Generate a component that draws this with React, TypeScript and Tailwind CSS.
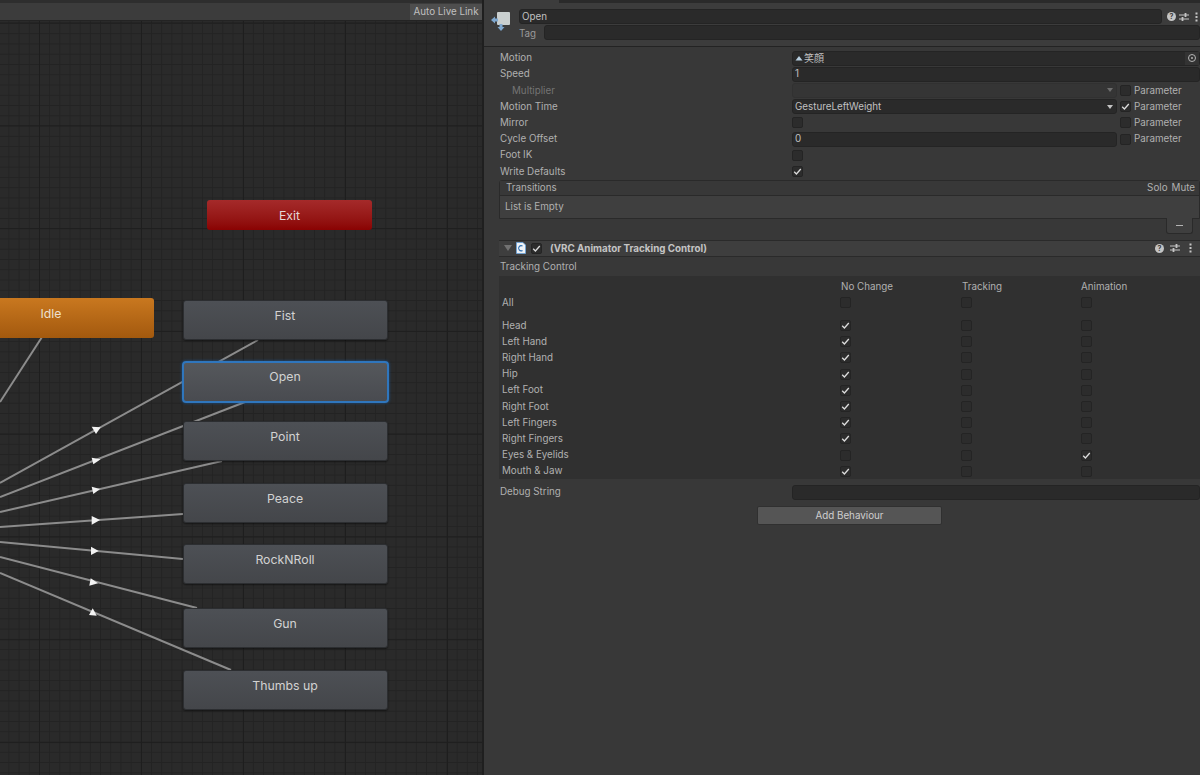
const font = "font-['Inter','Liberation_Sans',sans-serif]";

const links = [
  [42, 337, 0, 402],
  [258, 340, 0, 483],
  [245, 402, 0, 497],
  [222, 461, 0, 512],
  [183, 514, 0, 527],
  [183, 559, 0, 542],
  [197, 608, 0, 557],
  [231, 670, 0, 573],
];

const arrows = [
  "91.7,426.7 100.7,427.3 96,434",
  "91.7,457.7 100.7,459.3 93.3,464.3",
  "91.7,486.7 100,489 93.3,494",
  "91.7,516 100,520 91.7,524.7",
  "91,546.7 98.7,551 91,555",
  "89.3,585.7 90.7,578.3 98,583.3",
  "89,615 92.7,608.3 96.7,615.7",
];

const nodes = [
  { label: "Fist", top: 300 },
  { label: "Point", top: 421 },
  { label: "Peace", top: 483 },
  { label: "RockNRoll", top: 544 },
  { label: "Gun", top: 608 },
  { label: "Thumbs up", top: 670 },
];

const bodyParts = [
  { label: "Head", value: "n" },
  { label: "Left Hand", value: "n" },
  { label: "Right Hand", value: "n" },
  { label: "Hip", value: "n" },
  { label: "Left Foot", value: "n" },
  { label: "Right Foot", value: "n" },
  { label: "Left Fingers", value: "n" },
  { label: "Right Fingers", value: "n" },
  { label: "Eyes & Eyelids", value: "a" },
  { label: "Mouth & Jaw", value: "n" },
];

function Check({ on }: { on?: boolean }) {
  return (
    <span className="flex h-[11px] w-[11px] shrink-0 items-center justify-center rounded-[2px] border border-[#242424] bg-[#2c2c2c]">
      {on && (
        <svg width="9" height="9" viewBox="0 0 9 9">
          <path d="M1.2 4.8 L3.4 7 L7.8 2" fill="none" stroke="#dcdcdc" strokeWidth="1.3" />
        </svg>
      )}
    </span>
  );
}

function Field({ children, className = "" }: { children?: React.ReactNode; className?: string }) {
  return (
    <div className={`flex h-[15px] min-w-0 flex-1 items-center rounded-[3px] border border-[#242424] bg-[#2a2a2a] px-[2px] text-[#c0c0c0] ${className}`}>
      {children}
    </div>
  );
}

function Param({ on }: { on?: boolean }) {
  return (
    <div className="flex w-[83px] shrink-0 items-center gap-[3px] pl-[3px]">
      <Check on={on} />
      <span>Parameter</span>
    </div>
  );
}

function Row({ label, dim, children }: { label: string; dim?: boolean; children: React.ReactNode }) {
  return (
    <div className="flex h-[16.2px] items-center pl-[16px]">
      <span className={dim ? "w-[292px] shrink-0 pl-[12px] text-[#747474]" : "w-[292px] shrink-0"}>{label}</span>
      <div className="flex min-w-0 flex-1 items-center">{children}</div>
    </div>
  );
}

function HelpIcon() {
  return (
    <span className="flex h-[9px] w-[9px] items-center justify-center rounded-full bg-[#c4c4c4] text-[7px] font-bold leading-none text-[#383838]">?</span>
  );
}

function SlidersIcon() {
  return (
    <svg width="10" height="10" viewBox="0 0 10 10" stroke="#c4c4c4" strokeWidth="1.2">
      <path d="M0 3 H10 M0 7 H10" />
      <path d="M6.5 1 V5 M3.5 5 V9" strokeWidth="1.8" />
    </svg>
  );
}

function DotsIcon() {
  return (
    <svg width="3" height="10" viewBox="0 0 3 10" fill="#c4c4c4">
      <rect x="0.5" y="0.5" width="2" height="2" />
      <rect x="0.5" y="4" width="2" height="2" />
      <rect x="0.5" y="7.5" width="2" height="2" />
    </svg>
  );
}

function StateNode({ label, top }: { label: string; top: number }) {
  return (
    <div
      className="absolute left-[183px] flex h-[40px] w-[205px] justify-center rounded-[3px] border border-[#2c2e31] bg-gradient-to-b from-[#4d5055] to-[#44464a] pr-[1px] pt-[5.5px] text-[12.3px] text-[#d2d2d2] shadow-[0_1px_2px_rgba(0,0,0,0.5)]"
      style={{ top }}
    >
      {label}
    </div>
  );
}

function Graph() {
  return (
    <div className="relative w-[484px] shrink-0 overflow-hidden border-r-2 border-[#1f1f1f] bg-[#2a2a2a]">
      <div className="absolute inset-0 bg-[linear-gradient(to_right,#1e1e1e_1px,transparent_1px),linear-gradient(to_bottom,#1e1e1e_1px,transparent_1px),linear-gradient(to_right,#232323_1px,transparent_1px),linear-gradient(to_bottom,#232323_1px,transparent_1px)] bg-[size:102px_102.8px,102px_102.8px,10.2px_10.28px,10.2px_10.28px] bg-[position:39px_22.5px,39px_22.5px,8.4px_2.4px,8.4px_2.4px]" />

      <svg className="absolute inset-0" width="482" height="775">
        {links.map(([x1, y1, x2, y2], i) => (
          <line key={i} x1={x1} y1={y1} x2={x2} y2={y2} stroke="#8c8c8c" strokeWidth="2" />
        ))}
        {arrows.map((points) => (
          <polygon key={points} points={points} fill="#f2f2f2" />
        ))}
      </svg>

      <div className="relative z-10 flex h-[20px] items-center justify-end border-t-[3px] border-[#2e2e2e] bg-[#3c3c3c] shadow-[0_1px_0_#232323]">
        <span className="flex h-[16px] w-[72px] items-center justify-center bg-[#4e4e4e] pt-[1px] text-[9.8px] text-[#c0c0c0]">
          Auto Live Link
        </span>
      </div>

      <div className="absolute left-[207px] top-[200px] flex h-[30px] w-[165px] items-center justify-center rounded-[3px] bg-gradient-to-b from-[#a52a2a] to-[#8a0202] pt-[2px] text-[12.3px] text-[#e4d8d8]">
        Exit
      </div>
      <div className="absolute left-[-52px] top-[298px] flex h-[40px] w-[206px] justify-center rounded-[3px] bg-gradient-to-b from-[#c9781f] to-[#a3590e] pt-[7px] text-[12.3px] text-[#ede0d0]">
        Idle
      </div>

      {nodes.map((n) => (
        <StateNode key={n.label} label={n.label} top={n.top} />
      ))}

      <div className="absolute left-[182px] top-[361px] flex h-[42px] w-[207px] justify-center rounded-[4px] border-[2px] border-[#2f76bd] bg-gradient-to-b from-[#55585c] to-[#494b50] pr-[1px] pt-[5px] text-[12.3px] text-[#d2d2d2] shadow-[0_0_3px_#1d5a96]">
        Open
      </div>
    </div>
  );
}

function Inspector() {
  return (
    <div className="min-w-0 flex-1 bg-[#383838] text-[9.8px] leading-none text-[#b0b0b0]">
      {/* state header */}
      <div className="flex h-[47px] border-b border-[#232323] bg-[#3c3c3c]">
        <div className="flex w-[34px] shrink-0 items-start justify-center pt-[11px]">
          <svg width="20" height="21" viewBox="0 0 20 21">
            <rect x="6" y="1" width="13" height="13" rx="1" fill="#c9cfcf" />
            <path d="M0 9 L4 5.5 V7.5 H7 V10.5 H4 V12.5 Z" fill="#7fa8cf" />
            <path d="M10 20 L6.5 16 H8.5 V13 H11.5 V16 H13.5 Z" fill="#7fa8cf" />
          </svg>
        </div>
        <div className="flex min-w-0 flex-1 flex-col">
          <div className="flex h-[3px]">
            <div className="w-[41px]" />
            <div className="flex-1 bg-[#2a2a2a]" />
          </div>
          <div className="mt-[6px] flex items-center">
            <Field className="ml-[1px]">Open</Field>
            <div className="flex w-[38px] shrink-0 items-center pl-[5px]">
              <HelpIcon />
              <span className="ml-[3px]"><SlidersIcon /></span>
              <span className="ml-[6px]"><DotsIcon /></span>
            </div>
          </div>
          <div className="mt-[1px] flex h-[15px] items-center">
            <span className="w-[26px] shrink-0 pl-[1px] pt-[2px] text-[#9a9a9a]">Tag</span>
            <Field />
          </div>
        </div>
      </div>

      {/* motion settings */}
      <div className="pt-[3px]">
        <Row label="Motion">
          <Field className="pr-0">
            <svg width="8" height="8" viewBox="0 0 8 8" className="mr-[1px]">
              <path d="M0.5 6.5 L4 2 L7.5 6.5 Z" fill="#b8cfe0" />
            </svg>
            <span className="flex-1 font-['Noto_Sans_CJK_JP',sans-serif] text-[10px]">笑顔</span>
            <span className="flex h-full w-[14px] items-center justify-center bg-[#333]">
              <span className="flex h-[8px] w-[8px] items-center justify-center rounded-full border border-[#b4b4b4]">
                <span className="h-[2px] w-[2px] rounded-full bg-[#b4b4b4]" />
              </span>
            </span>
          </Field>
        </Row>
        <Row label="Speed">
          <Field>1</Field>
        </Row>
        <Row label="Multiplier" dim>
          <div className="flex h-[15px] min-w-0 flex-1 items-center justify-end rounded-[3px] border border-[#313131] bg-[#353535] pr-[3px]">
            <span className="h-0 w-0 border-x-[3.5px] border-t-[4px] border-x-transparent border-t-[#6e6e6e]" />
          </div>
          <Param />
        </Row>
        <Row label="Motion Time">
          <Field className="justify-between pr-[3px]">
            GestureLeftWeight
            <span className="h-0 w-0 border-x-[3.5px] border-t-[4px] border-x-transparent border-t-[#c4c4c4]" />
          </Field>
          <Param on />
        </Row>
        <Row label="Mirror">
          <div className="flex-1">
            <Check />
          </div>
          <Param />
        </Row>
        <Row label="Cycle Offset">
          <Field>0</Field>
          <Param />
        </Row>
        <Row label="Foot IK">
          <Check />
        </Row>
        <Row label="Write Defaults">
          <Check on />
        </Row>
      </div>

      {/* transitions list */}
      <div className="ml-[15px] flex h-[39px] flex-col rounded-t-[3px] border border-[#2a2a2a] bg-[#3f3f3f]">
        <div className="flex h-[15px] shrink-0 items-center justify-between border-b border-[#2a2a2a] bg-[#383838] pl-[6px] pr-[4px]">
          <span>Transitions</span>
          <span className="flex gap-[4px]">
            <span>Solo</span>
            <span>Mute</span>
          </span>
        </div>
        <div className="flex flex-1 items-center pl-[5px] pt-[1px]">List is Empty</div>
      </div>
      <div className="flex h-[15px] justify-end pr-[7px]">
        <div className="mt-[-1px] flex h-[16px] w-[27px] items-center justify-center rounded-b-[3px] border border-t-0 border-[#2a2a2a] bg-[#3f3f3f]">
          <span className="h-[1px] w-[7px] bg-[#b4b4b4]" />
        </div>
      </div>

      {/* tracking control */}
      <div className="ml-[15px] mt-[6px] flex h-[17px] items-center border-y border-[#2a2a2a] bg-[#3e3e3e]">
        <span className="ml-[5px] h-0 w-0 border-x-[4px] border-t-[6px] border-x-transparent border-t-[#727272]" />
        <svg width="10" height="12" viewBox="0 0 10 12" className="ml-[4px]">
          <path d="M0.5 0.5 H7 L9.5 3 V11.5 H0.5 Z" fill="#eef2f6" stroke="#6aa5de" strokeWidth="0.8" />
          <path d="M6.5 4 A2.6 2.6 0 1 0 6.5 8.5" fill="none" stroke="#2a6cb0" strokeWidth="1.1" />
        </svg>
        <span className="ml-[5px]">
          <Check on />
        </span>
        <span className="ml-[8px] flex-1 pt-[1px] font-bold text-[#c4c4c4]">(VRC Animator Tracking Control)</span>
        <HelpIcon />
        <span className="ml-[6px]"><SlidersIcon /></span>
        <span className="ml-[9px] mr-[8px]"><DotsIcon /></span>
      </div>
      <div className="flex h-[19px] items-center pl-[16px] pt-[1px]">Tracking Control</div>

      <div className="ml-[15px] bg-[#303030] pl-[3px]">
        <div className="flex h-[18px] items-center pt-[4px]">
          <span className="ml-[339px] w-[121px]">No Change</span>
          <span className="w-[119px]">Tracking</span>
          <span>Animation</span>
        </div>
        <div className="flex h-[18px] items-center">
          <span className="w-[338px]">All</span>
          <span className="w-[121px]"><Check /></span>
          <span className="w-[120px]"><Check /></span>
          <Check />
        </div>
        <div className="h-[6px]" />
        {bodyParts.map((p) => (
          <div key={p.label} className="flex h-[16.2px] items-center">
            <span className="w-[338px]">{p.label}</span>
            <span className="w-[121px]"><Check on={p.value === "n"} /></span>
            <span className="w-[120px]"><Check /></span>
            <Check on={p.value === "a"} />
          </div>
        ))}
      </div>

      <div className="mt-[5px] flex h-[16px] items-center pl-[16px]">
        <span className="w-[292px] shrink-0">Debug String</span>
        <Field />
      </div>
      <div className="mt-[6px] flex justify-start pl-[273px]">
        <div className="flex h-[19px] w-[185px] items-center justify-center rounded-[2px] border border-[#303030] bg-[#555555] text-[#cfcfcf]">
          Add Behaviour
        </div>
      </div>
    </div>
  );
}

export default function App() {
  return (
    <div className={`flex h-[775px] w-[1200px] overflow-hidden bg-[#383838] ${font}`}>
      <Graph />
      <Inspector />
    </div>
  );
}
